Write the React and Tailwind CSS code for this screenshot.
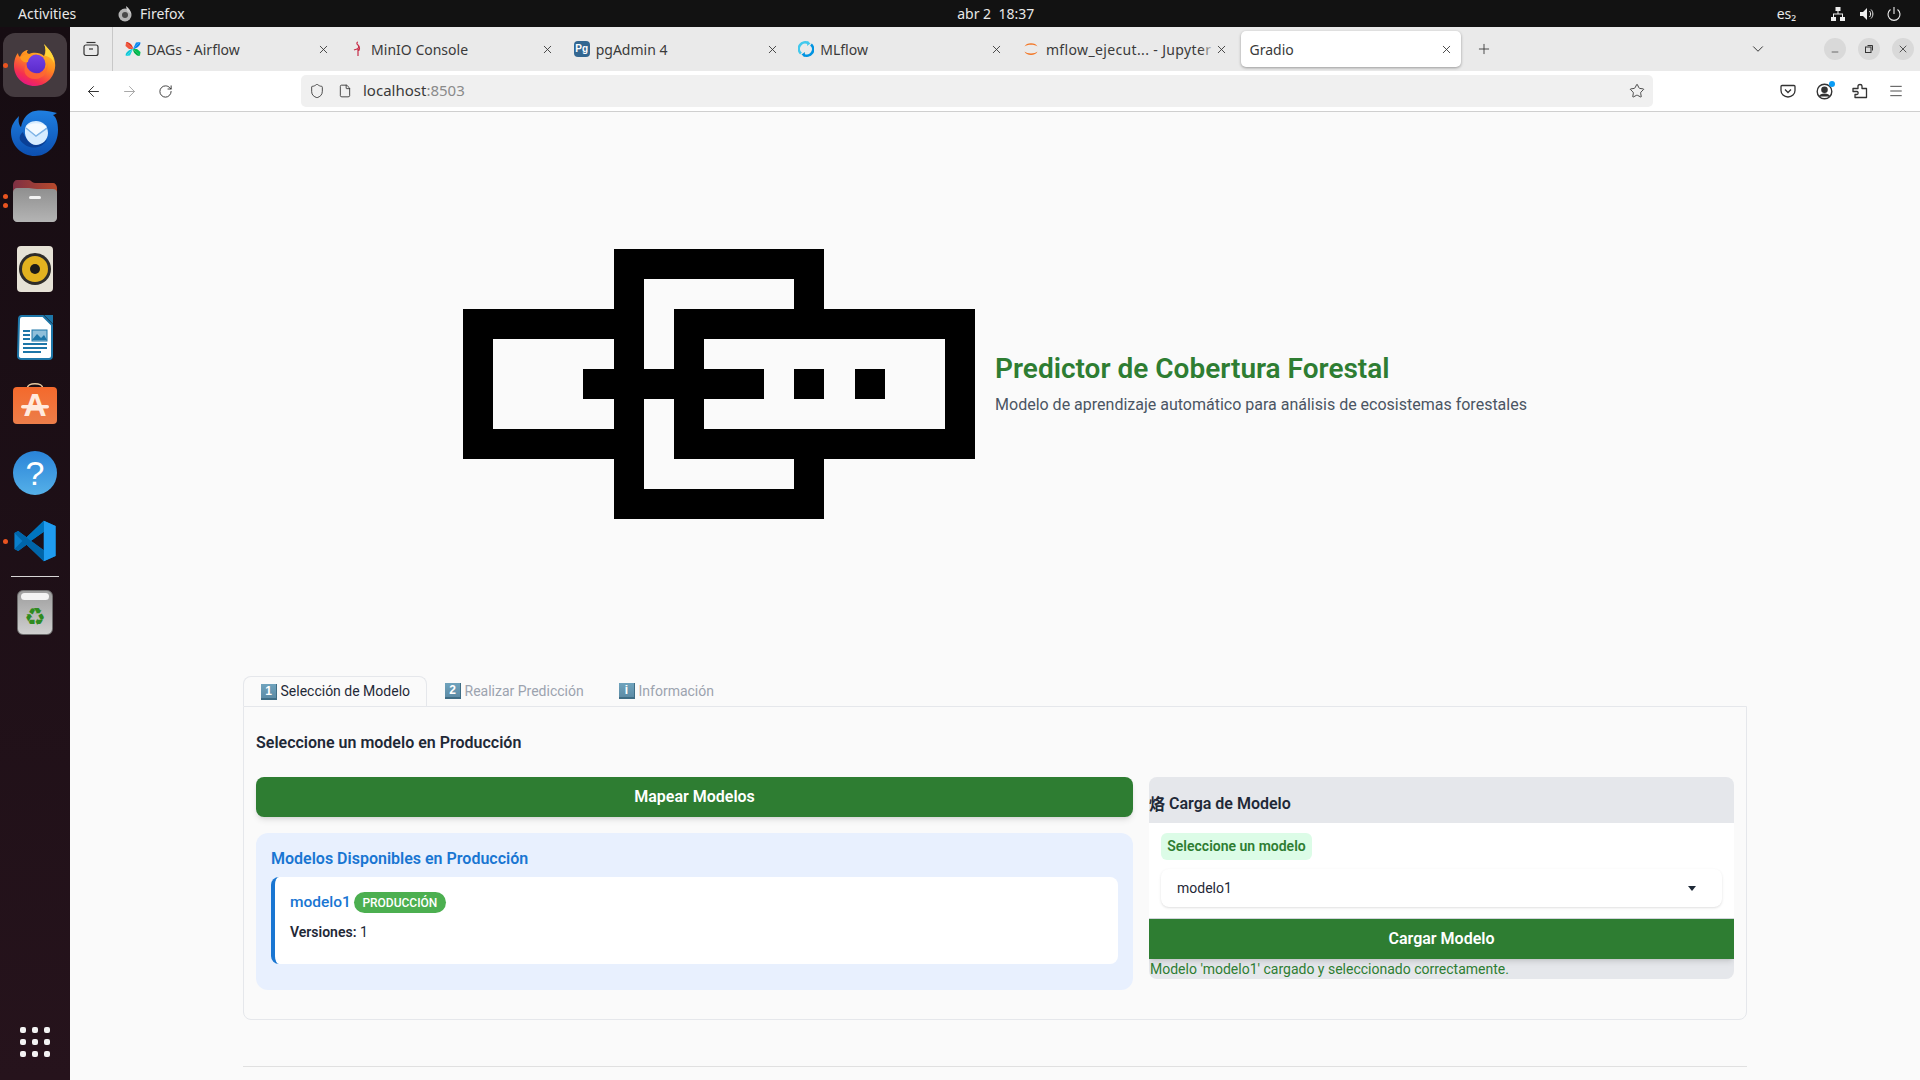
import React from "react";
import { ArrowLeft, ArrowRight, RotateCw, Shield, File, Star, Menu, X, Plus, ChevronDown, Minus } from "lucide-react";

function Airflow() {
  return (
    <svg width="16" height="16" viewBox="0 0 16 16">
      <path d="M8 8L1 1.5C1.5 1 2 1 3 1.2C5.5 2 8 5 8 8Z" fill="#e43921" />
      <path d="M8 8L1 1.5L0.5 5L4 8Z" fill="#f0553c" />
      <path d="M8 8L15 1C15.5 1.5 15.5 2.5 15 3.5C14 5.5 11 8 8 8Z" fill="#017cee" />
      <path d="M8 8L11 1.5L15 1Z" fill="#0a8cf0" />
      <path d="M8 8L1 15C0.5 14.5 0.5 13.5 1 12.5C2 10.5 5 8 8 8Z" fill="#11c4d4" />
      <path d="M8 8L5 14.5L1 15Z" fill="#11d4e4" />
      <path d="M8 8L15 14.5C14.5 15 14 15 13 14.8C10.5 14 8 11 8 8Z" fill="#00ad46" />
      <path d="M8 8L15 14.5L15.5 11L12 8Z" fill="#00c050" />
    </svg>
  );
}
function Minio() {
  return (
    <svg width="16" height="16" viewBox="0 0 16 16" fill="none" stroke="#c72e49" strokeWidth="1.2">
      <path d="M9 1C7.5 1 7.5 3 9 4C10 5 10 7 8 8C7 8.5 6 8.5 5 9M9 8V15M9 4C11 6 11 9 9 10" />
    </svg>
  );
}
function Pg() {
  return (
    <div className="w-4 h-4 rounded-sm bg-[#336791] flex items-center justify-center text-[10px] font-bold leading-none text-white font-['Liberation_Sans',sans-serif]">
      Pg
    </div>
  );
}
function Mlflow() {
  return (
    <svg width="16" height="16" viewBox="0 0 16 16" fill="none" strokeWidth="2.6">
      <path d="M3 12.5A6.4 6.4 0 0 1 10.5 2.2" stroke="#43c9ed" />
      <path d="M13 3.5A6.4 6.4 0 0 1 5.5 13.8" stroke="#0194e2" />
      <path d="M9.5 0L12.5 2.5L9 5Z" fill="#43c9ed" />
      <path d="M6.5 16L3.5 13.5L7 11Z" fill="#0194e2" />
    </svg>
  );
}
function Jupyter() {
  return (
    <svg width="16" height="16" viewBox="0 0 16 16" fill="#f37726">
      <path d="M1.5 5.5C3 1 13 1 14.5 5.5C12 3 4 3 1.5 5.5Z" />
      <path d="M1.5 10.5C3 15 13 15 14.5 10.5C12 13 4 13 1.5 10.5Z" />
    </svg>
  );
}

function FirefoxIcon() {
  return (
    <svg width="44" height="44" viewBox="0 0 44 44">
      <defs>
        <linearGradient id="ffa" x1="0.8" y1="0" x2="0.3" y2="1">
          <stop offset="0" stopColor="#ffd02c" />
          <stop offset="0.45" stopColor="#ff8a1f" />
          <stop offset="0.8" stopColor="#f5304f" />
          <stop offset="1" stopColor="#e31587" />
        </linearGradient>
        <linearGradient id="ffb" x1="0.5" y1="0" x2="0.5" y2="1">
          <stop offset="0" stopColor="#7542e5" />
          <stop offset="1" stopColor="#592acb" />
        </linearGradient>
      </defs>
      <path d="M31 1C33 4 38 8 41 15C45 26 39 42 22 43C9 43 1 33 1 23C1 17 3 12 5 10C5 12 6 13 7 14C9 9 12 7 15 7C13 9 14 10 16 11C20 9 27 9 31 13C33 9 33 5 31 1Z" fill="url(#ffa)" />
      <circle cx="23" cy="21" r="9.5" fill="url(#ffb)" />
      <path d="M7 14C11 11 16 11 20 12C17 14 15 16 15 19C11 20 8 18 7 14Z" fill="#ff9a1f" />
      <path d="M13 21C14 28 22 32 29 30C33 28 35 23 34 19C36 28 31 36 22 36C13 36 9 29 13 21Z" fill="#ff6a30" opacity="0.75" />
      <path d="M31 1C37 7 41 12 41 20C39 15 35 13 32 13C33 9 33 5 31 1Z" fill="#ffd73a" />
    </svg>
  );
}
function ThunderbirdIcon() {
  return (
    <svg width="48" height="46" viewBox="0 0 48 46">
      <defs>
        <linearGradient id="tb" x1="0.5" y1="0" x2="0.5" y2="1">
          <stop offset="0" stopColor="#1f7fe0" />
          <stop offset="1" stopColor="#0c4fb0" />
        </linearGradient>
      </defs>
      <path d="M24 1C32 0 38 1 46 3C44 4 43 5 42 5C45 7 47 12 47 20C47 35 37 46 24 46C11 46 0 36 0 22C0 16 3 11 8 6C7 11 8 15 10 17C12 8 17 2 24 1Z" fill="url(#tb)" />
      <path d="M12 22C14 30 24 37 36 30C30 40 16 40 9 30C8 27 9 24 12 22Z" fill="#0a3f95" />
      <path d="M14 20C14 14 20 11 25 11C31 11 37 15 37 23C37 30 31 35 25 35C19 35 13 28 14 20Z" fill="#d7ecff" />
      <path d="M15 18L25 26L36 18" fill="none" stroke="#7fb4e6" strokeWidth="1.6" />
      <path d="M15 17C19 12 31 12 36 17L25 25Z" fill="#f4faff" />
    </svg>
  );
}
function FilesIcon() {
  return (
    <svg width="44" height="42" viewBox="0 0 44 42">
      <defs>
        <linearGradient id="fi" x1="0.5" y1="0" x2="0.5" y2="1">
          <stop offset="0" stopColor="#8f8f8f" />
          <stop offset="1" stopColor="#b4b4b4" />
        </linearGradient>
        <linearGradient id="fr" x1="0" y1="0" x2="1" y2="0">
          <stop offset="0" stopColor="#7e3044" />
          <stop offset="1" stopColor="#b84a2c" />
        </linearGradient>
      </defs>
      <path d="M0 5C0 2 2 0 4 0H16C18 0 19 3 22 3H40C42 3 44 5 44 8V14H0Z" fill="url(#fr)" />
      <path d="M0 12C0 10 2 8 4 8H16C18 8 20 9 24 9H40C42 9 44 10 44 12V38C44 40 42 42 40 42H4C2 42 0 40 0 38Z" fill="url(#fi)" />
      <rect x="16" y="16" width="12" height="3" rx="1.5" fill="#f3f3f3" />
    </svg>
  );
}
function RhythmIcon() {
  return (
    <svg width="36" height="46" viewBox="0 0 36 46">
      <rect x="0" y="0" width="36" height="46" rx="4" fill="#e6e2d6" />
      <circle cx="18" cy="23" r="16" fill="#2f2d2a" />
      <circle cx="18" cy="23" r="13" fill="#e3b21f" />
      <circle cx="18" cy="23" r="5" fill="#1c1b19" />
    </svg>
  );
}
function WriterIcon() {
  return (
    <svg width="36" height="45" viewBox="0 0 36 45">
      <path d="M2 4C2 2 3 1 5 1H26L35 10V41C35 43 34 44 32 44H5C3 44 1 43 1 41Z" fill="#fff" stroke="#1d76a8" strokeWidth="2" />
      <path d="M27 0L36 9V0Z" fill="#1d76a8" />
      <path d="M6 16H13M6 20H13M6 24H13M6 29H30M6 33H30M6 37H24" stroke="#1d76a8" strokeWidth="1.8" />
      <rect x="15" y="15" width="15" height="11" fill="#8fbfda" stroke="#1d76a8" />
      <path d="M15 25L20 19L24 23L27 20L30 25Z" fill="#1d76a8" />
    </svg>
  );
}
function SoftwareIcon() {
  return (
    <div className="relative w-[44px] h-[43px] -mt-[6px]">
      <svg width="44" height="43" viewBox="0 0 44 43" className="absolute inset-0">
        <defs>
          <linearGradient id="sw" x1="0.5" y1="0" x2="0.5" y2="1">
            <stop offset="0" stopColor="#f4692c" />
            <stop offset="1" stopColor="#ec7e4a" />
          </linearGradient>
        </defs>
        <path d="M14 8C14 1 30 1 30 8" fill="none" stroke="#e8c9a0" strokeWidth="1.6" />
        <rect x="0" y="6" width="44" height="37" rx="4" fill="url(#sw)" />
        <rect x="8" y="24" width="28" height="3.6" rx="1.8" fill="#ffeade" />
      </svg>
      <span className="absolute inset-x-0 top-[7px] text-center text-[32px] leading-[34px] font-bold text-[#ffeade] font-['Liberation_Sans',sans-serif]">
        A
      </span>
    </div>
  );
}
function HelpIcon() {
  return (
    <div className="w-[44px] h-[44px] rounded-full bg-gradient-to-b from-[#2a84d8] to-[#55b0e8] flex items-center justify-center text-white text-[34px] leading-none font-['Liberation_Sans',sans-serif]">
      ?
    </div>
  );
}
function VSCodeIcon() {
  return (
    <svg width="42" height="42" viewBox="0 0 100 100">
      <path d="M71 2L30 41L10 26L1 31V69L10 74L30 59L71 98L99 86V14ZM71 28V72L40 50Z" fill="#0a7fcb" />
      <path d="M71 2L99 14V86L71 98Z" fill="#1f9cf0" />
      <path d="M1 31L10 26L71 72V98L30 59L10 74L1 69L20 50Z" fill="#0065a9" />
      <path d="M71 2V28L40 50L30 41Z" fill="#0075bf" />
    </svg>
  );
}
function TrashIcon() {
  return (
    <div className="relative w-[36px] h-[45px] rounded-md bg-gradient-to-b from-[#9e9e9e] to-[#cfcfcf] border border-[#6c6c6c] flex items-center justify-center">
      <div className="absolute left-[3px] right-[3px] top-[2px] h-[7px] bg-[#f3f3f3] rounded-sm" />
      <span className="mt-[10px] text-[24px] leading-none text-[#2e8b20] font-['DejaVu_Sans',sans-serif]">♻</span>
    </div>
  );
}

function DockItem({ children, dots = 0, active = false }) {
  return (
    <div className="relative w-full h-[68px] shrink-0 flex items-center justify-center">
      {active && <div className="absolute left-[3px] top-[2px] w-[64px] h-[64px] rounded-xl bg-[#443a3f]" />}
      {dots > 0 && (
        <div className="absolute left-[3px] inset-y-0 flex flex-col justify-center gap-[4px] z-10">
          {Array.from({ length: dots }).map((_, i) => (
            <div key={i} className="w-[5px] h-[5px] rounded-full bg-[#e95420]" />
          ))}
        </div>
      )}
      <div className="relative">{children}</div>
    </div>
  );
}

function Dock() {
  return (
    <aside className="w-[70px] shrink-0 flex flex-col items-center pt-[4px] pb-[23px] bg-gradient-to-b from-[#160c12] to-[#26131c]">
      <DockItem dots={1} active><FirefoxIcon /></DockItem>
      <DockItem><ThunderbirdIcon /></DockItem>
      <DockItem dots={2}><FilesIcon /></DockItem>
      <DockItem><RhythmIcon /></DockItem>
      <DockItem><WriterIcon /></DockItem>
      <DockItem><SoftwareIcon /></DockItem>
      <DockItem><HelpIcon /></DockItem>
      <DockItem dots={1}><VSCodeIcon /></DockItem>
      <div className="w-[48px] h-px my-[1px] bg-[#d8d5d6] shrink-0" />
      <DockItem><TrashIcon /></DockItem>
      <div className="mt-auto grid grid-cols-3 gap-[6px]">
        {Array.from({ length: 9 }).map((_, i) => (
          <div key={i} className="w-[6px] h-[6px] rounded-[2px] bg-[#f2f2f2]" />
        ))}
      </div>
    </aside>
  );
}

function TopBar() {
  return (
    <header className="h-[27px] shrink-0 bg-[#121212] flex items-center text-[#e8e8e8] text-[14px] relative font-['Noto_Sans',sans-serif]">
      <span className="ml-[18px] w-[62px] whitespace-nowrap">Activities</span>
      <svg width="16" height="16" viewBox="0 0 16 16" className="ml-[37px]">
        <circle cx="8" cy="9" r="6.5" fill="#b5b5b5" />
        <circle cx="8" cy="9" r="3" fill="#4a4a4a" />
        <path d="M9 0C12 2 14 5 14 8L10 5Z" fill="#d0d0d0" />
      </svg>
      <span className="ml-[7px] whitespace-nowrap">Firefox</span>
      <span className="ml-[766px] w-[90px] whitespace-pre text-center">abr 2  18:37</span>
      <span className="ml-[736px] whitespace-nowrap">es₂</span>
      <svg width="16" height="16" viewBox="0 0 16 16" fill="#eee" className="ml-[34px]">
        <rect x="5.5" y="1" width="5" height="4" />
        <rect x="1" y="11" width="5" height="4" />
        <rect x="10" y="11" width="5" height="4" />
        <path d="M7.5 5h1v2.5H13V11h-1V8.5H4V11H3V7.5h4.5z" />
      </svg>
      <svg width="16" height="16" viewBox="0 0 16 16" fill="#eee" className="ml-[13px]">
        <path d="M1 6H4L8 2V14L4 10H1Z" />
        <path d="M10.5 5C12 6.5 12 9.5 10.5 11" fill="none" stroke="#eee" strokeWidth="1" />
        <path d="M12 3.5C14.5 6 14.5 10 12 12.5" fill="none" stroke="#eee" strokeWidth="1" />
      </svg>
      <svg width="16" height="16" viewBox="0 0 16 16" fill="none" stroke="#eee" strokeWidth="1.1" className="ml-[11px]">
        <path d="M8 1V8" />
        <path d="M4.5 3.5A6 6 0 1 0 11.5 3.5" />
      </svg>
    </header>
  );
}

function Tab({ icon, title, active = false, fade = false }) {
  return (
    <div className="w-[224.6px] shrink-0 h-full flex items-center">
      <div
        className={
          active
            ? "w-[220px] h-[36px] flex items-center gap-[6px] pl-[8px] pr-[8px] bg-white rounded-[5px] shadow-[0_1px_3px_rgba(0,0,0,0.35)]"
            : "w-[220px] h-[36px] flex items-center gap-[6px] pl-[6px] pr-[9px]"
        }
      >
        {icon && <div className="w-4 h-4 shrink-0">{icon}</div>}
        <div className={fade ? "relative flex-1 min-w-0 ml-px -mr-[6px] whitespace-nowrap text-[14px] tracking-[0.36px] text-[#3a3a3a]" : "relative flex-1 min-w-0 overflow-hidden whitespace-nowrap text-[14px] text-[#3a3a3a]"}>
          {title}
          {fade && <div className="absolute right-0 inset-y-0 w-[14px] bg-gradient-to-r from-transparent to-[#eaeaea]" />}
        </div>
        <X size={13} strokeWidth={1.6} className="shrink-0 text-[#333]" />
      </div>
    </div>
  );
}

function TabStrip() {
  return (
    <div className="h-[44px] shrink-0 bg-[#eaeaea] flex items-center">
      <div className="w-[43px] h-full shrink-0 border-r border-[#c8c8c8] flex items-center justify-center">
        <svg width="16" height="16" viewBox="0 0 16 16" fill="none" stroke="#333" strokeWidth="1.2">
          <path d="M3.5 1.5H12.5" />
          <rect x="1" y="4" width="14" height="10.5" rx="2" />
          <path d="M6 8H10" />
        </svg>
      </div>
      <div className="ml-[5.5px] flex h-full">
        <Tab icon={<Airflow />} title="DAGs - Airflow" />
        <Tab icon={<Minio />} title="MinIO Console" />
        <Tab icon={<Pg />} title="pgAdmin 4" />
        <Tab icon={<Mlflow />} title="MLflow" />
        <Tab icon={<Jupyter />} title="mflow_ejecut... - Jupyter" fade />
        <Tab title="Gradio" active />
      </div>
      <Plus size={16} strokeWidth={1.3} className="ml-[10px] text-[#333]" />
      <ChevronDown size={18} strokeWidth={1.3} className="ml-[257px] text-[#333]" />
      <div className="ml-auto mr-[6px] flex gap-[12px]">
        <div className="w-[22px] h-[22px] rounded-full bg-[#d9d9d9] flex items-center justify-center">
          <Minus size={10} strokeWidth={1.6} className="mt-[5px] text-[#333]" />
        </div>
        <div className="w-[22px] h-[22px] rounded-full bg-[#d9d9d9] flex items-center justify-center">
          <svg width="10" height="10" viewBox="0 0 10 10" fill="none" stroke="#333">
            <rect x="1.5" y="3" width="5.5" height="5.5" />
            <path d="M3.5 1.5H8.5V6.5" />
          </svg>
        </div>
        <div className="w-[22px] h-[22px] rounded-full bg-[#d9d9d9] flex items-center justify-center">
          <X size={12} strokeWidth={1.6} className="text-[#333]" />
        </div>
      </div>
    </div>
  );
}

function Toolbar() {
  return (
    <div className="h-[41px] shrink-0 bg-white border-b border-[#cfcfcf] flex items-center text-[#333]">
      <ArrowLeft size={17} strokeWidth={1.4} className="ml-[15px]" />
      <ArrowRight size={17} strokeWidth={1.4} className="ml-[19px] text-[#a8a8a8]" />
      <RotateCw size={15} strokeWidth={1.5} className="ml-[20px]" />
      <div className="ml-[128px] w-[1352px] h-[32px] rounded-[5px] bg-[#f0f0f0] flex items-center -mt-px">
        <Shield size={16} strokeWidth={1.3} className="ml-[8px]" />
        <File size={14} strokeWidth={1.5} className="ml-[13px]" />
        <span className="ml-[11px] text-[15px] text-[#3a3a3a] whitespace-nowrap">
          localhost<span className="text-[#8a8a8a]">:8503</span>
        </span>
        <Star size={16} strokeWidth={1.3} className="ml-auto mr-[8px]" />
      </div>
      <svg width="16" height="16" viewBox="0 0 16 16" fill="none" stroke="#333" strokeWidth="1.3" className="ml-[127px]">
        <path d="M2 2.5H14C14.5 2.5 15 3 15 3.5V7.5C15 11 12 14 8 14C4 14 1 11 1 7.5V3.5C1 3 1.5 2.5 2 2.5Z" />
        <path d="M5 6.5L8 9.5L11 6.5" />
      </svg>
      <div className="relative ml-[20px]">
        <svg width="17" height="17" viewBox="0 0 17 17" fill="none" stroke="#333" strokeWidth="1.4">
          <circle cx="8.5" cy="8.5" r="7.3" />
          <circle cx="8.5" cy="6.8" r="2.6" fill="#333" />
          <path d="M3.5 13.5C5 10.5 12 10.5 13.5 13.5" fill="#333" />
        </svg>
        <div className="absolute right-[-2px] top-[-2px] w-[6px] h-[6px] rounded-full bg-[#0a9cf5]" />
      </div>
      <svg width="16" height="16" viewBox="0 0 16 16" fill="none" stroke="#333" strokeWidth="1.3" strokeLinejoin="round" className="ml-[19px]">
        <path d="M1 5.5H6V3C6 1 10 1 10 3V5.5H14.5V14.5H3V11.5H5C6.5 11.5 6.5 8.5 5 8.5H1Z" />
      </svg>
      <Menu size={16} strokeWidth={1.3} className="ml-[20px]" />
    </div>
  );
}

function Logo() {
  return (
    <svg width="512" height="270" viewBox="0 0 17 9" preserveAspectRatio="none" className="shrink-0" shapeRendering="crispEdges">
      <path
        d="M5 0H12V2H17V7H12V9H5V7H0V2H5ZM6 1V4H7V2H11V1ZM1 3V6H5V5H4V4H5V3ZM8 3V4H10V5H8V6H16V3ZM11 4H12V5H11ZM13 4H14V5H13ZM6 5V8H11V7H7V5Z"
        fill="#000"
        fillRule="evenodd"
      />
    </svg>
  );
}

function Keycap({ label }) {
  return (
    <span className="inline-flex w-[16px] h-[16px] shrink-0 items-center justify-center bg-gradient-to-b from-[#6fa3bd] to-[#5d8ca6] border-b-2 border-r border-[#3f6d85] text-white text-[12px] font-bold leading-none font-['Liberation_Sans',sans-serif]">
      {label}
    </span>
  );
}

function GradioTab({ cap, label, active = false, width }) {
  return (
    <div
      className={
        active
          ? "h-[30px] w-[184px] flex items-center gap-[3.5px] pl-[17px] bg-[#fafafa] border border-b-0 border-[#e5e7eb] rounded-t-lg text-[#1f2937] -mb-px relative z-10"
          : `h-[30px] ${width} flex items-center gap-[3.5px] pl-[18px] text-[#9ca3af]`
      }
    >
      <Keycap label={cap} />
      <span className="whitespace-nowrap">{label}</span>
    </div>
  );
}

function Content() {
  return (
    <main className="flex-1 min-h-0 overflow-hidden bg-[#fafafa] pt-[137px] font-['Roboto',sans-serif]">
      <div className="flex justify-center items-center gap-[20px]">
        <Logo />
        <div>
          <h1 className="text-[28px] leading-[34px] font-semibold text-[#2e7d32] whitespace-nowrap">
            Predictor de Cobertura Forestal
          </h1>
          <p className="mt-[7px] text-[16px] leading-[24px] text-[#4b5563] whitespace-nowrap">
            Modelo de aprendizaje automático para análisis de ecosistemas forestales
          </p>
        </div>
      </div>

      <div className="mx-[173px] mt-[157px]">
        <div className="flex text-[14px]">
          <GradioTab cap="1" label="Selección de Modelo" active />
          <GradioTab cap="2" label="Realizar Predicción" width="w-[174px]" />
          <GradioTab cap="i" label="Información" width="w-[120px]" />
        </div>
        <section className="h-[314px] border border-[#e5e7eb] rounded-b-lg px-[12px] pt-[24px] bg-[#fafafa]">
          <h2 className="text-[16px] leading-[24px] font-semibold text-[#1f2937]">Seleccione un modelo en Producción</h2>
          <div className="mt-[22px] flex gap-[16px] items-start">
            <div className="w-[877px] shrink-0">
              <button className="w-full h-[40px] rounded-lg bg-[#2e7d32] text-white text-[16px] font-semibold shadow-md">
                Mapear Modelos
              </button>
              <div className="mt-[16px] h-[157px] rounded-xl bg-[#e8f0fe] px-[15px] pt-[14px]">
                <h3 className="text-[16px] leading-[24px] font-semibold text-[#1976d2]">Modelos Disponibles en Producción</h3>
                <div className="mt-[6px] h-[87px] rounded-lg border-l-4 border-[#1976d2] bg-white pl-[15px] pt-[15px]">
                  <div className="flex items-center gap-[3px] h-[21px]">
                    <span className="text-[15.5px] font-medium text-[#1976d2]">modelo1</span>
                    <span className="h-[21px] w-[92px] rounded-full bg-[#4caf50] text-white text-[12px] font-medium flex items-center justify-center">
                      PRODUCCIÓN
                    </span>
                  </div>
                  <p className="mt-[9px] text-[14px] leading-[20px] text-[#1f2937]">
                    <span className="font-semibold">Versiones:</span> 1
                  </p>
                </div>
              </div>
            </div>
            <div className="w-[585px] shrink-0 h-[202px] rounded-lg bg-[#e5e7eb] overflow-hidden">
              <div className="h-[46px] pt-[8px] flex items-center text-[16px] font-semibold text-[#1f2937]">
                <span className="-mt-[2px] font-['Noto_Sans_CJK_SC',sans-serif]">烙</span>
                <span className="ml-[4px]">Carga de Modelo</span>
              </div>
              <div className="h-[96px] bg-white border-b border-[#d1d5db] px-[12px] pt-[10px]">
                <div className="w-[151px] h-[27px] rounded-md bg-[#dcfce7] text-[14px] font-semibold text-[#2e7d32] flex items-center justify-center whitespace-nowrap">
                  Seleccione un modelo
                </div>
                <div className="mt-[9px] h-[38px] rounded-lg bg-white shadow-sm flex items-center pl-[16px] pr-[26px] text-[14px] text-[#1f2937]">
                  <span>modelo1</span>
                  <span className="ml-auto w-0 h-0 border-x-[4px] border-x-transparent border-t-[5px] border-t-[#1f2937]" />
                </div>
              </div>
              <button className="w-full h-[40px] bg-[#2e7d32] text-white text-[16px] font-semibold shadow-md">
                Cargar Modelo
              </button>
              <p className="h-[20px] text-[14px] leading-[20px] text-[#2e7d32] pl-px whitespace-nowrap">
                Modelo 'modelo1' cargado y seleccionado correctamente.
              </p>
            </div>
          </div>
        </section>
        <hr className="mt-[46px] border-t border-[#e0e0e0]" />
      </div>
    </main>
  );
}

export default function App() {
  return (
    <div className="w-[1920px] h-[1080px] flex flex-col overflow-hidden font-['Noto_Sans',sans-serif]">
      <TopBar />
      <div className="flex-1 min-h-0 flex">
        <Dock />
        <div className="flex-1 min-w-0 flex flex-col">
          <TabStrip />
          <Toolbar />
          <Content />
        </div>
      </div>
    </div>
  );
}
